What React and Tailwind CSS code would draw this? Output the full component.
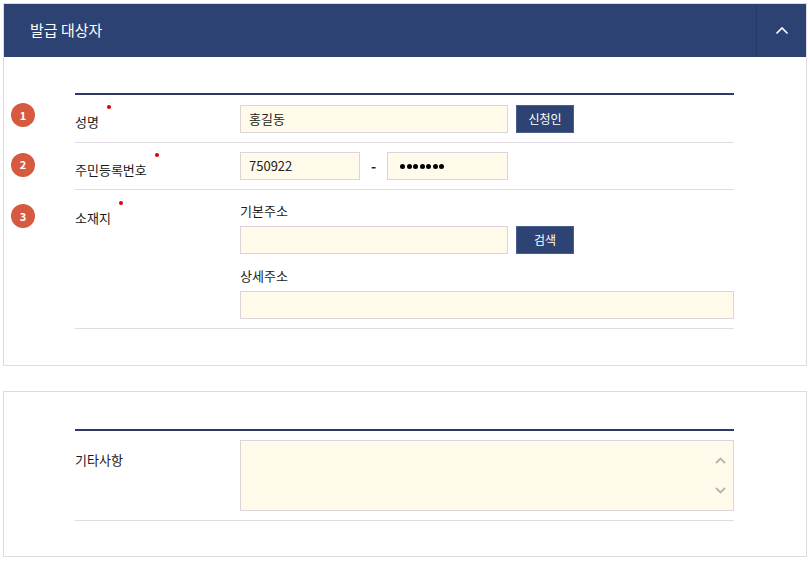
import React from "react";

const font = { fontFamily: '"Noto Sans CJK KR", "Noto Sans", sans-serif' };

const Badge = ({ n, className = "" }) => (
  <div className={`w-[64px] shrink-0 flex ${className}`}>
    <div className="w-[24px] h-[24px] rounded-full bg-[#d65a3f] text-white text-[11px] font-bold flex items-center justify-center">
      {n}
    </div>
  </div>
);

const Label = ({ children, required }) => (
  <span className="relative text-[13px] text-[#1a1a1a] leading-[20px]">
    {children}
    {required && (
      <span className="absolute -right-[12px] -top-[7px] w-[4px] h-[4px] rounded-full bg-[#e00000]" />
    )}
  </span>
);

const Field = ({ className = "", children }) => (
  <div
    className={`h-[28px] bg-[#fffaea] border border-[#dcd4d8] flex items-center px-[8px] text-[13px] text-[#222] ${className}`}
  >
    {children}
  </div>
);

const NavyButton = ({ children }) => (
  <button className="w-[58px] h-[28px] bg-[#2d4373] border border-[#4a5f8c] text-white text-[12px] flex items-center justify-center">
    {children}
  </button>
);

export default function App() {
  return (
    <div className="w-[810px] h-[561px] bg-white pt-[3px] px-[3px]" style={font}>
      {/* panel 1 */}
      <div className="w-[804px] border border-[#e0d8e2]">
        <div className="h-[53px] bg-[#2c4272] flex items-center justify-between">
          <span className="pl-[26px] text-white text-[15px]">발급 대상자</span>
          <div className="w-[50px] h-full border-l border-[#26385f] flex items-center justify-center">
            <svg width="14" height="9" viewBox="0 0 14 9" fill="none">
              <path d="M1.5 7.5L7 2L12.5 7.5" stroke="white" strokeWidth="1.6" />
            </svg>
          </div>
        </div>

        <div className="pl-[7px] pt-[36px] pb-[36px]">
          <div className="ml-[64px] w-[659px] border-t-2 border-[#2a3a6a]" />

          {/* 성명 */}
          <div className="flex items-center h-[48px]">
            <Badge n="1" className="mb-[8px]" />
            <div className="w-[659px] h-full flex items-center border-b border-[#e2dbe6]">
              <div className="w-[165px] pt-[3px]">
                <Label required>성명</Label>
              </div>
              <Field className="w-[268px]">홍길동</Field>
              <div className="ml-[8px]">
                <NavyButton>신청인</NavyButton>
              </div>
            </div>
          </div>

          {/* 주민등록번호 */}
          <div className="flex items-center h-[47px]">
            <Badge n="2" className="mb-[4px]" />
            <div className="w-[659px] h-full flex items-center border-b border-[#e2dbe6]">
              <div className="w-[165px] pt-[3px]">
                <Label required>주민등록번호</Label>
              </div>
              <Field className="w-[120px]">750922</Field>
              <span className="w-[27px] text-center text-[14px] font-bold text-[#222]">-</span>
              <Field className="w-[121px] gap-[1.5px] px-[12px]">
                {Array.from({ length: 7 }).map((_, i) => (
                  <span key={i} className="w-[5px] h-[5px] rounded-full bg-black" />
                ))}
              </Field>
            </div>
          </div>

          {/* 소재지 */}
          <div className="flex">
            <div className="pt-[14px]">
              <Badge n="3" />
            </div>
            <div className="w-[659px] flex border-b border-[#e2dbe6] pt-[11px] pb-[9px]">
              <div className="w-[165px] pt-[3px]">
                <Label required>소재지</Label>
              </div>
              <div className="flex flex-col">
                <span className="text-[13px] text-[#1a1a1a] leading-[20px]">기본주소</span>
                <div className="flex mt-[5px]">
                  <Field className="w-[268px]" />
                  <div className="ml-[8px]">
                    <NavyButton>검색</NavyButton>
                  </div>
                </div>
                <span className="mt-[12px] text-[13px] text-[#1a1a1a] leading-[20px]">상세주소</span>
                <Field className="mt-[5px] w-[494px]" />
              </div>
            </div>
          </div>
        </div>
      </div>

      {/* panel 2 */}
      <div className="mt-[25px] w-[804px] border border-[#e0d8e2] pl-[71px] pt-[37px] pb-[35px]">
        <div className="w-[659px] border-t-2 border-[#2a3a6a]" />
        <div className="w-[659px] flex border-b border-[#e2dbe6] pt-[9px] pb-[9px]">
          <div className="w-[165px] pt-[6px]">
            <span className="text-[13px] text-[#1a1a1a] leading-[20px]">기타사항</span>
          </div>
          <div className="relative w-[494px] h-[71px] bg-[#fffaea] border border-[#dcd4d8]">
            <div className="absolute right-0 top-0 bottom-0 w-[26px] flex flex-col items-center justify-between py-[16px]">
              <svg width="11" height="7" viewBox="0 0 11 7" fill="none">
                <path d="M1 6L5.5 1.5L10 6" stroke="#b4b4b4" strokeWidth="1.8" />
              </svg>
              <svg width="11" height="7" viewBox="0 0 11 7" fill="none">
                <path d="M1 1L5.5 5.5L10 1" stroke="#b4b4b4" strokeWidth="1.8" />
              </svg>
            </div>
          </div>
        </div>
      </div>
    </div>
  );
}
